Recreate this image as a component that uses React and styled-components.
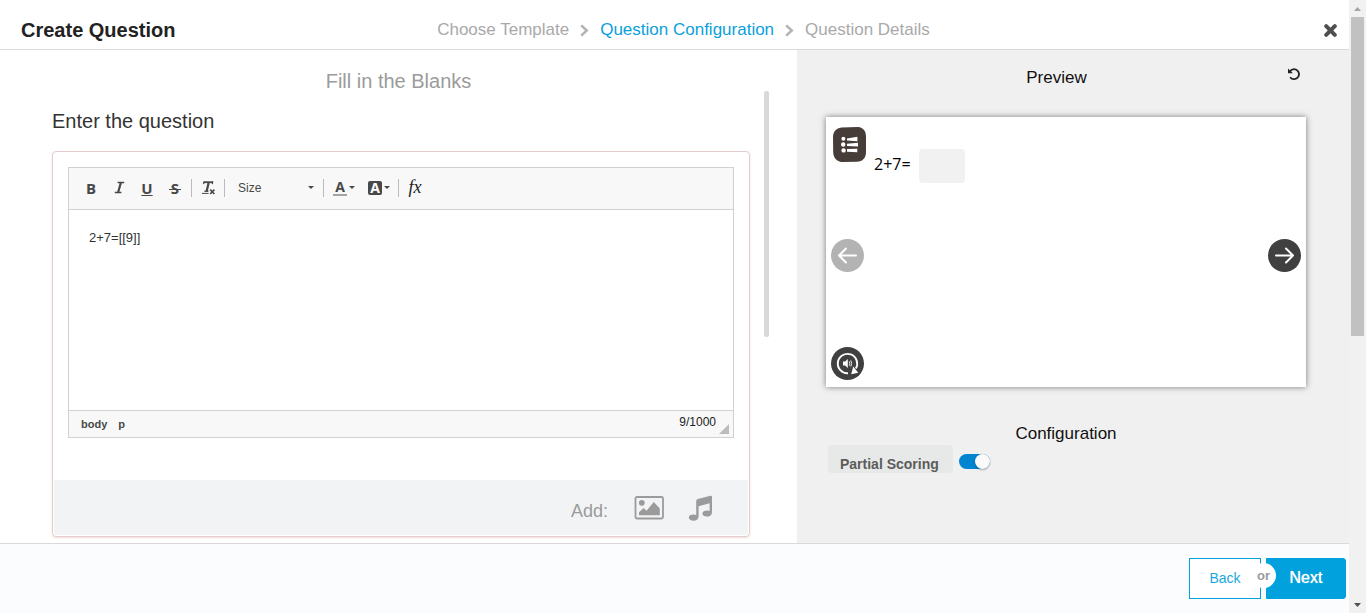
import React, { useState } from "react";
import styled, { createGlobalStyle } from "styled-components";

const GlobalStyle = createGlobalStyle`
  *, *::before, *::after { box-sizing: border-box; }
  body {
    margin: 0;
    background: #fff;
    color: #222;
    font-family: "Liberation Sans", Arial, sans-serif;
  }
  button, input, select, textarea { font: inherit; color: inherit; margin: 0; }
  h1, h2, p { margin: 0; }
`;

const Window = styled.div`
  display: grid;
  grid-template-columns: minmax(0, 1fr) 17px;
  min-height: 100vh;
`;

const Dialog = styled.div`
  display: flex;
  flex-direction: column;
`;

const Header = styled.header`
  display: grid;
  grid-template-columns: 1fr auto 1fr;
  align-items: center;
  height: 50px;
  padding: 11px 12px 0 21px;
  border-bottom: 1px solid #d9d9d9;
  background: #fff;
`;

const DialogTitle = styled.h1`
  font-size: 20px;
  line-height: 22px;
  font-weight: 700;
`;

const Steps = styled.nav`
  display: flex;
  align-items: center;
  gap: 11px;
  padding-left: 9px;
`;

const Step = styled.a`
  font-size: 17px;
  line-height: 20px;
  text-decoration: none;
  color: ${(p) => (p.$active ? "#0c9fdb" : "#a9a9a9")};
`;

const IconButton = styled.button`
  display: flex;
  align-items: center;
  justify-content: center;
  padding: 0;
  border: 0;
  background: transparent;
  cursor: pointer;
`;

const CloseButton = styled(IconButton)`
  justify-self: end;
`;

const Main = styled.main`
  flex: 1;
  display: grid;
  grid-template-columns: minmax(0, 797fr) minmax(0, 552fr);
`;

const EditorPane = styled.section`
  display: grid;
  grid-template-columns: minmax(0, 1fr) 5px;
  column-gap: 14px;
  align-content: start;
  padding: 19px 28px 6px 52px;
`;

const TemplateName = styled.h2`
  grid-column: 1 / -1;
  padding-right: 24px;
  font-size: 20px;
  line-height: 24px;
  font-weight: 400;
  color: #9b9b9b;
  text-align: center;
  margin-bottom: -2px;
`;

const PaneThumb = styled.div`
  height: 246px;
  border-radius: 2px;
  background: #d8d8d8;
`;

const FieldLabel = styled.label`
  display: block;
  padding: 18px 0 18px;
  font-size: 20px;
  line-height: 24px;
  color: #333;
`;

const Card = styled.div`
  padding: 1px;
  border: 1px solid #e6cccc;
  border-radius: 4px;
  box-shadow: 0 1px 2px rgba(200, 120, 120, 0.25);
`;

const RichEditor = styled.div`
  margin: 14px 14px 42px;
  border: 1px solid #d1d1d1;
`;

const Toolbar = styled.div`
  display: flex;
  align-items: center;
  height: 42px;
  padding: 0 8px 2px;
  border-bottom: 1px solid #d1d1d1;
  background: #f8f8f8;
`;

const Tool = styled.button`
  display: flex;
  align-items: center;
  justify-content: center;
  width: ${(p) => p.$width || 28}px;
  height: 28px;
  padding: 0;
  border: 0;
  background: transparent;
  color: #484848;
  font-family: "Open Sans", "Noto Sans", sans-serif;
  font-size: 15px;
  font-weight: 700;
  cursor: pointer;
`;

const Divider = styled.span`
  width: 1px;
  height: 18px;
  margin: 0 2px;
  background: #bcbcbc;
`;

const SizeWrap = styled.span`
  display: flex;
  align-items: center;
  width: 94px;
  padding: 0 7px 0 11px;
`;

const SizeSelect = styled.select`
  flex: 1;
  appearance: none;
  border: 0;
  padding: 0;
  background: transparent;
  font-size: 12px;
  color: #484848;
`;

const Formula = styled.i`
  font-family: "Liberation Serif", serif;
  font-size: 18px;
  font-weight: 400;
  color: #222;
`;

const Content = styled.textarea`
  display: block;
  width: 100%;
  height: 200px;
  padding: 17px 20px;
  border: 0;
  outline: 0;
  resize: none;
  background: #fff;
  font-size: 13px;
  line-height: 21px;
  color: #333;
`;

const StatusBar = styled.div`
  display: flex;
  height: 27px;
  padding: 3px 4px 3px 12px;
  border-top: 1px solid #d1d1d1;
  background: #f8f8f8;
`;

const PathItem = styled.span`
  margin-right: 11px;
  padding-top: 2px;
  font-size: 11px;
  line-height: 16px;
  font-weight: 700;
  color: #484848;
`;

const Counter = styled.output`
  margin-left: auto;
  margin-right: 3px;
  font-size: 12px;
  line-height: 16px;
  color: #222;
`;

const Resizer = styled.span`
  align-self: flex-end;
  border: 5px solid #bcbcbc;
  border-top-color: transparent;
  border-left-color: transparent;
`;

const AddBar = styled.div`
  display: flex;
  align-items: center;
  justify-content: flex-end;
  height: 55px;
  padding-right: 35px;
  border-radius: 0 0 3px 3px;
  background: #f2f3f5;
`;

const AddLabel = styled.span`
  padding-top: 6px;
  margin-right: 26px;
  font-size: 18px;
  line-height: 22px;
  color: #9b9b9b;
`;

const MediaButton = styled(IconButton)`
  & + & { margin-left: 24px; }
`;

const PreviewPane = styled.aside`
  padding: 16px 43px 20px 29px;
  background: #f0f0f0;
`;

const PreviewHeader = styled.div`
  display: flex;
  align-items: center;
  padding-right: 5px;
  margin-bottom: 27px;
`;

const PaneTitle = styled.h2`
  flex: 1;
  font-size: 17px;
  line-height: 24px;
  font-weight: 400;
  text-align: center;
  color: #111;
`;

const ResetButton = styled(IconButton)`
  margin-top: -8px;
`;

const Stage = styled.div`
  display: grid;
  grid-template-rows: 1fr auto 1fr;
  aspect-ratio: 16 / 9;
  padding: 10px 5px 7px;
  background: #fff;
  box-shadow: 0 0 6px rgba(0, 0, 0, 0.5);
`;

const StageTop = styled.div`
  display: flex;
  align-items: flex-start;
  padding-left: 2px;
`;

const StageNav = styled.div`
  display: flex;
  justify-content: space-between;
  padding-top: 4px;
`;

const Round = styled(IconButton)`
  width: 33px;
  height: 33px;
  border-radius: 50%;
  background: ${(p) => (p.$muted ? "#b3b3b3" : "#404040")};
`;

const ReplayButton = styled(Round)`
  align-self: end;
`;

const Equation = styled.label`
  display: flex;
  align-items: flex-start;
  gap: 8px;
  padding: 22px 0 0 8px;
  font-family: "Open Sans", "Noto Sans", sans-serif;
  font-size: 16px;
  line-height: 30px;
  color: #000;
`;

const Blank = styled.input`
  width: 46px;
  height: 34px;
  border: 0;
  border-radius: 4px;
  background: #f1f1f1;
`;

const ConfigTitle = styled(PaneTitle)`
  margin-top: 35px;
`;

const Setting = styled.div`
  display: flex;
  align-items: center;
  gap: 6px;
  margin-top: -1px;
  padding-left: 2px;
`;

const SettingLabel = styled.label`
  height: 28px;
  padding: 10px 14px 0 12px;
  border-radius: 3px;
  background: #e7e9e9;
  font-size: 14px;
  line-height: 18px;
  font-weight: 700;
  color: #5c5c5c;
`;

const Switch = styled.input`
  appearance: none;
  display: flex;
  align-items: center;
  width: 31px;
  height: 15px;
  margin: 4px 0 0;
  border-radius: 8px;
  background: #0284d0;
  cursor: pointer;
  &::before {
    content: "";
    width: 15px;
    height: 15px;
    border-radius: 50%;
    background: #fafafa;
    box-shadow: 0 1px 2px rgba(0, 0, 0, 0.3);
  }
  &:checked { justify-content: flex-end; }
  &:not(:checked) { background: #aaa; }
`;

const Footer = styled.footer`
  display: flex;
  justify-content: flex-end;
  height: 70px;
  padding: 14px 3px 14px;
  border-top: 1px solid #d9d9d9;
  background: #fbfcfe;
`;

const Actions = styled.div`
  position: relative;
  display: flex;
  gap: 5px;
`;

const ActionButton = styled.button`
  width: ${(p) => (p.$primary ? 80 : 72)}px;
  height: 41px;
  padding: 0 0 2px;
  border: 1px solid #00a1dc;
  border-radius: ${(p) => (p.$primary ? "0 3px 3px 0" : "0")};
  background: ${(p) => (p.$primary ? "#00a1dc" : "#fff")};
  color: ${(p) => (p.$primary ? "#fff" : "#1aa7dc")};
  font-size: ${(p) => (p.$primary ? 16 : 14)}px;
  text-shadow: ${(p) => (p.$primary ? "0 0 1px #fff" : "none")};
  cursor: pointer;
`;

const Or = styled.span`
  position: absolute;
  left: 62px;
  top: 5px;
  width: 25px;
  height: 25px;
  border-radius: 50%;
  background: #fff;
  font-size: 13px;
  line-height: 25px;
  font-weight: 700;
  text-align: center;
  color: #9b9b9b;
`;

const PageScroll = styled.div`
  display: flex;
  flex-direction: column;
  align-items: center;
  padding: 7px 0 6px;
  background: #f1f1f1;
`;

const PageThumb = styled.div`
  width: 13px;
  height: 319px;
  margin: 6px 0 auto;
  background: #c1c1c1;
`;

const Chevron = () => (
  <svg width="9" height="13" viewBox="0 0 9 13" fill="none" stroke="#b3b3b3" strokeWidth="2.5" aria-hidden="true">
    <path d="M1.2 1.3 6.8 6.5 1.2 11.7" />
  </svg>
);

const Caret = () => (
  <svg width="6" height="3" viewBox="0 0 6 3" fill="#484848" aria-hidden="true">
    <path d="M0 0h6L3 3z" />
  </svg>
);

const CloseIcon = () => (
  <svg width="13" height="13" viewBox="0 0 13 13" stroke="#4f4f4f" strokeWidth="4" strokeLinecap="round" aria-hidden="true">
    <path d="M2.2 2.2 10.8 10.8M10.8 2.2 2.2 10.8" />
  </svg>
);

const ResetIcon = () => (
  <svg width="14" height="14" viewBox="0 0 14 14" fill="none" aria-hidden="true">
    <path d="M3 4.4C4 2.8 5.4 2.2 7 2.2a5 5 0 1 1-3.9 8.1" stroke="#222" strokeWidth="1.8" />
    <path d="M1 1.6v4.6h4.9z" fill="#222" />
  </svg>
);

const ItalicIcon = () => (
  <svg width="11" height="13" viewBox="0 0 11 13" fill="none" stroke="#484848" aria-hidden="true">
    <path d="M3.6 1.5h6.6M.8 11.5h6.6" strokeWidth="1.4" />
    <path d="M6.9 1.5 4.1 11.5" strokeWidth="2.2" />
  </svg>
);

const StrikeLetter = styled.span`
  display: flex;
  align-items: center;
  justify-content: center;
  width: 12px;
  background: linear-gradient(#484848, #484848) center 11px / 12px 1px no-repeat;
`;

const ClearFormatIcon = () => (
  <svg width="15" height="15" viewBox="0 0 15 15" fill="none" stroke="#484848" aria-hidden="true">
    <path d="M2.6 2.2h9.4" strokeWidth="1.8" />
    <path d="M3 1.5 2.6 4.2M11.8 1.5l-.5 2.7" strokeWidth="1.2" />
    <path d="M7.8 2 5.6 11.4" strokeWidth="2.2" />
    <path d="M3.4 11.2h4" strokeWidth="1.4" />
    <path d="M1 13.4h6.6" strokeWidth="1" />
    <path d="m9.2 9.6 4.2 4.4m0-4.4-4.2 4.4" strokeWidth="1.6" />
  </svg>
);

const ToolInner = styled.span`
  display: flex;
  align-items: center;
  gap: 2px;
`;

const ColorLetter = styled.span`
  width: 14px;
  font-size: 14px;
  line-height: 14px;
  border-bottom: ${(p) => (p.$filled ? "0" : "2px solid #a3a3a3")};
  border-radius: ${(p) => (p.$filled ? 2 : 0)}px;
  background: ${(p) => (p.$filled ? "#484848" : "transparent")};
  color: ${(p) => (p.$filled ? "#fff" : "#484848")};
`;

const ImageIcon = () => (
  <svg width="30" height="24" viewBox="0 0 30 24" aria-hidden="true">
    <rect x="1.5" y="1" width="27.5" height="21.5" rx="1.5" fill="none" stroke="#9b9b9b" strokeWidth="1.8" />
    <circle cx="7.8" cy="6.8" r="2.9" fill="#9b9b9b" />
    <path d="M5 19.2v-3l4.6-4.2 3 2.7L19.8 6l6 6.6v6.6z" fill="#9b9b9b" />
  </svg>
);

const MusicIcon = () => (
  <svg width="25" height="26" viewBox="0 0 25 26" fill="#9b9b9b" aria-hidden="true">
    <path d="M8.2 6.2Q8.2 4.6 9.8 4.1L22.4.7Q24 .4 24 1.8v15.6c0 2.6-2.2 4.2-5 4.2-2.8 0-4.6-1.2-4.6-3 0-2 2.2-3.1 4.8-3.1 1 0 1.7.2 2.4.5V8.3l-11 3v10.2c0 2.6-2.1 4.2-5 4.2-2.8 0-4.8-1.2-4.8-3.1s2.1-3.1 4.8-3.1c1 0 1.9.2 2.6.5z" />
  </svg>
);

const MenuIcon = () => (
  <svg width="33" height="35" viewBox="0 0 33 35" aria-hidden="true">
    <path d="M8.5.5 25 .1C30.5.6 33 4.5 33 10v15c0 6-3.5 9.6-9 9.8l-15 .2C3.6 34.6.4 31 .2 25L0 10C.2 4.6 3 1.2 8.5.5z" fill="#463c38" />
    <g fill="#fff">
      <circle cx="10.4" cy="11.8" r="2" />
      <circle cx="10.2" cy="17.5" r="2.2" />
      <circle cx="10.6" cy="23.4" r="2.2" />
      <path d="M14 11.5 24.4 9.8v4.4L14 13.6zM14 16.7l11-.9v3.6l-11-.5zM14 22l10.3-.3v3.5L14 24.8z" />
    </g>
  </svg>
);

const Arrow = ({ flip }) => (
  <svg width="21" height="17" viewBox="0 0 21 17" fill="none" stroke="#fff" strokeWidth="2" strokeLinecap="round" strokeLinejoin="round" aria-hidden="true">
    {flip ? <path d="M19 8.5H2M9 1.5 2 8.5l7 7" /> : <path d="M2 8.5h17M12 1.5l7 7-7 7" />}
  </svg>
);

const ReplayIcon = () => (
  <svg width="33" height="33" viewBox="0 0 33 33" fill="none" aria-hidden="true">
    <path d="M17 26.3A9.7 9.7 0 1 1 24.8 21.6" stroke="#fff" strokeWidth="1.9" />
    <path d="M22.2 19.6 20.2 27.2 27.2 25.8z" fill="#fff" />
    <path d="M12 14.5h2.2l2.6-2.4v8.8l-2.6-2.4H12z" fill="#fff" />
    <path d="M18.3 14.4q1 2.1 0 4.2M19.8 13.4q1.6 3.1 0 6.2" stroke="#fff" strokeWidth="0.9" />
  </svg>
);

const ScrollArrow = ({ down }) => (
  <svg width="7" height="4" viewBox="0 0 7 4" fill={down ? "#505050" : "#a3a3a3"} aria-hidden="true">
    {down ? <path d="M0 0h7L3.5 4z" /> : <path d="M0 4h7L3.5 0z" />}
  </svg>
);

export default function App() {
  const [text, setText] = useState("2+7=[[9]]");
  const [partial, setPartial] = useState(true);

  return (
    <Window>
      <GlobalStyle />
      <Dialog>
        <Header>
          <DialogTitle>Create Question</DialogTitle>
          <Steps aria-label="Steps">
            <Step href="#template">Choose Template</Step>
            <Chevron />
            <Step href="#configuration" $active aria-current="step">Question Configuration</Step>
            <Chevron />
            <Step href="#details">Question Details</Step>
          </Steps>
          <CloseButton type="button" aria-label="Close"><CloseIcon /></CloseButton>
        </Header>

        <Main>
          <EditorPane>
            <TemplateName>Fill in the Blanks</TemplateName>
            <div>
              <FieldLabel htmlFor="question">Enter the question</FieldLabel>
              <Card>
                <RichEditor>
                  <Toolbar role="toolbar" aria-label="Formatting">
                    <Tool type="button" aria-label="Bold">B</Tool>
                    <Tool type="button" aria-label="Italic"><ItalicIcon /></Tool>
                    <Tool type="button" aria-label="Underline"><u>U</u></Tool>
                    <Tool type="button" aria-label="Strikethrough"><StrikeLetter>S</StrikeLetter></Tool>
                    <Divider />
                    <Tool type="button" aria-label="Remove format"><ClearFormatIcon /></Tool>
                    <Divider />
                    <SizeWrap>
                      <SizeSelect aria-label="Font size" defaultValue="Size">
                        <option>Size</option>
                      </SizeSelect>
                      <Caret />
                    </SizeWrap>
                    <Divider />
                    <Tool type="button" $width={36} aria-label="Text color">
                      <ToolInner><ColorLetter>A</ColorLetter><Caret /></ToolInner>
                    </Tool>
                    <Tool type="button" $width={34} aria-label="Background color">
                      <ToolInner><ColorLetter $filled>A</ColorLetter><Caret /></ToolInner>
                    </Tool>
                    <Divider />
                    <Tool type="button" aria-label="Formula"><Formula>fx</Formula></Tool>
                  </Toolbar>
                  <Content id="question" spellCheck={false} value={text} onChange={(e) => setText(e.target.value)} />
                  <StatusBar>
                    <PathItem>body</PathItem>
                    <PathItem>p</PathItem>
                    <Counter htmlFor="question">{text.length}/1000</Counter>
                    <Resizer />
                  </StatusBar>
                </RichEditor>
                <AddBar>
                  <AddLabel>Add:</AddLabel>
                  <MediaButton type="button" aria-label="Add image"><ImageIcon /></MediaButton>
                  <MediaButton type="button" aria-label="Add audio"><MusicIcon /></MediaButton>
                </AddBar>
              </Card>
            </div>
            <PaneThumb />
          </EditorPane>

          <PreviewPane>
            <PreviewHeader>
              <PaneTitle>Preview</PaneTitle>
              <ResetButton type="button" aria-label="Reload preview"><ResetIcon /></ResetButton>
            </PreviewHeader>
            <Stage>
              <StageTop>
                <IconButton type="button" aria-label="Menu"><MenuIcon /></IconButton>
                <Equation>2+7=<Blank type="text" aria-label="Answer" /></Equation>
              </StageTop>
              <StageNav>
                <Round type="button" $muted aria-label="Previous"><Arrow flip /></Round>
                <Round type="button" aria-label="Next slide"><Arrow /></Round>
              </StageNav>
              <ReplayButton type="button" aria-label="Replay audio"><ReplayIcon /></ReplayButton>
            </Stage>
            <ConfigTitle>Configuration</ConfigTitle>
            <Setting>
              <SettingLabel htmlFor="partial">Partial Scoring</SettingLabel>
              <Switch id="partial" type="checkbox" checked={partial} onChange={(e) => setPartial(e.target.checked)} />
            </Setting>
          </PreviewPane>
        </Main>

        <Footer>
          <Actions>
            <ActionButton type="button">Back</ActionButton>
            <ActionButton type="button" $primary>Next</ActionButton>
            <Or>or</Or>
          </Actions>
        </Footer>
      </Dialog>
      <PageScroll aria-hidden="true">
        <ScrollArrow />
        <PageThumb />
        <ScrollArrow down />
      </PageScroll>
    </Window>
  );
}
